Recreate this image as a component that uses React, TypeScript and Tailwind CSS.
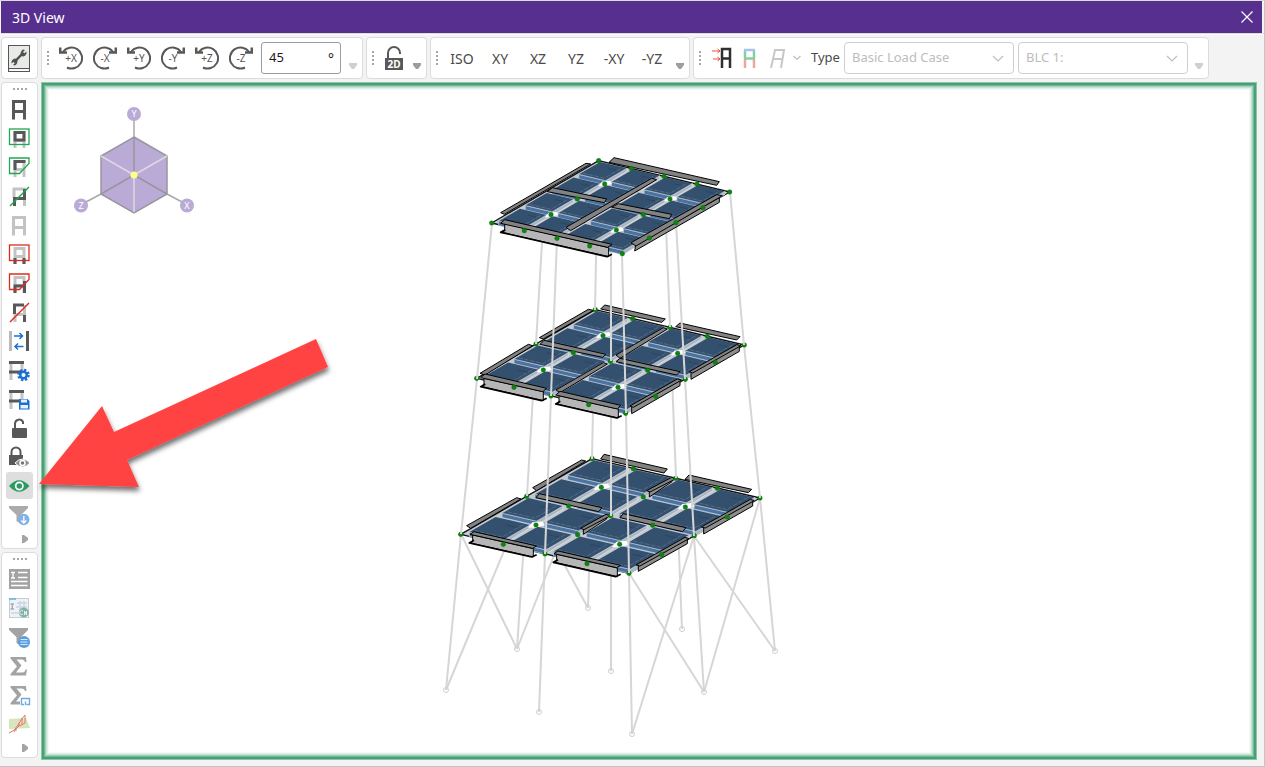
import { Fragment } from "react";
import type { ReactNode } from "react";

type Pt = [number, number];

type Deck = {
  x: number;
  y: number;
  left: Pt;
  back: Pt;
  right: Pt;
  front: Pt;
  nodes: Pt[];
  webs: string[];
  lightWebs: string[];
  flanges: string[];
};

// deck coordinates are in thirds of a pixel, relative to x / y
const topDeck: Deck = {
  x: 470,
  y: 145,
  left: [65, 234],
  back: [386, 47],
  right: [779, 141],
  front: [457, 326],
  nodes: [[65, 234], [386, 47], [779, 141], [457, 326], [484, 71], [582, 94], [681, 117], [404, 117], [243, 209], [600, 162], [439, 255], [163, 257], [261, 280], [359, 303], [538, 279], [618, 233], [699, 188], [322, 162], [520, 209]],
  lightWebs: ["104,236 416,308 416,335 96,262 104,258"],
  webs: ["497,300 748,158 748,172 494,318"],
  flanges: [
    "92,203 348,55 362,57 103,208",
    "432,38 748,110 740,121 417,52",
    "247,128 410,162 403,173 232,140",
    "445,176 605,208 598,221 425,187",
    "288,247 545,100 560,104 302,257",
    "104,224 426,298 413,307 92,235",
    "483,293 740,149 757,152 498,303",
  ],
};

const midDeck: Deck = {
  x: 460,
  y: 295,
  left: [50, 250],
  back: [406, 44],
  right: [853, 150],
  front: [497, 355],
  nodes: [[50, 250], [228, 147], [406, 44], [630, 97], [853, 150], [676, 253], [497, 355], [273, 303], [451, 199], [518, 71], [742, 124], [429, 122], [653, 175], [250, 225], [474, 277], [162, 277], [386, 329], [587, 304], [766, 202], [340, 173], [563, 226]],
  lightWebs: ["72,250 250,290 250,317 66,275 72,271", "297,302 475,342 475,369 291,327 297,323"],
  webs: ["515,335 660,256 660,272 515,356", "693,232 838,153 838,169 693,253"],
  flanges: [
    "238,128 385,43 400,46 250,132",
    "60,235 205,148 218,152 75,240",
    "434,30 616,72 605,82 422,42",
    "660,84 840,125 830,135 647,95",
    "468,180 610,98 622,102 480,190",
    "252,136 438,178 428,187 240,148",
    "480,190 660,230 650,240 468,200",
    "288,285 430,203 442,207 300,293",
    "75,237 260,280 248,290 62,248",
    "300,289 482,331 472,342 287,300",
    "510,333 652,252 665,255 520,337",
    "688,230 830,149 843,152 698,234",
  ],
};

const bottomDeck: Deck = {
  x: 440,
  y: 445,
  left: [62, 268],
  back: [456, 41],
  right: [960, 159],
  front: [567, 385],
  nodes: [[62, 268], [260, 154], [456, 41], [707, 100], [960, 159], [763, 272], [567, 385], [315, 327], [512, 212], [580, 71], [832, 130], [484, 127], [610, 156], [736, 186], [288, 240], [413, 269], [539, 298], [190, 298], [441, 356], [665, 329], [862, 216], [386, 183], [638, 241]],
  lightWebs: ["98,270 280,311 280,336 92,294 98,290", "350,328 532,369 532,395 344,352 350,348"],
  webs: ["595,361 742,281 742,296 595,379", "791,247 938,167 938,183 791,267", "430,250 500,212 500,222 430,268", "628,138 696,100 696,110 628,156"],
  flanges: [
    "278,128 425,45 437,48 290,137",
    "80,242 230,158 243,162 92,250",
    "492,28 682,72 672,84 482,42",
    "747,90 935,133 925,143 735,103",
    "620,137 695,97 708,101 630,141",
    "298,146 486,188 476,200 288,158",
    "550,206 738,248 728,260 540,218",
    "422,250 498,208 512,212 432,254",
    "102,260 290,303 278,310 90,268",
    "354,318 542,361 530,368 342,326",
    "588,360 735,277 747,281 600,363",
    "784,246 931,163 943,167 796,249",
  ],
};

// nine columns: left, left mid, back, back mid, right, right mid, front, front mid, centre
const top: Pt[] = [[492, 223], [545, 192], [598, 161], [664, 177], [730, 192], [676, 223], [622, 254], [557, 238], [611, 208]];
const mid: Pt[] = [[477, 379], [536, 344], [595, 310], [670, 327], [744, 345], [685, 379], [626, 413], [551, 396], [611, 361]];
const bottom: Pt[] = [[461, 534], [527, 496], [592, 459], [676, 478], [760, 498], [694, 536], [629, 573], [545, 554], [611, 516]];
const ground: Pt[] = [[446, 690], [517, 649], [588, 608], [682, 629], [775, 651], [704, 692], [632, 734], [539, 712], [611, 671]];

const braces: [Pt, Pt][] = [
  [bottom[0], ground[1]],
  [bottom[1], ground[0]],
  [bottom[2], ground[1]],
  [bottom[1], ground[2]],
  [bottom[6], ground[5]],
  [bottom[5], ground[6]],
  [bottom[5], ground[4]],
  [bottom[4], ground[5]],
];

function Members({ from, to }: { from: Pt[]; to: Pt[] }) {
  return (
    <g stroke="#d6d6d6" strokeWidth="2">
      {from.map((p, i) => (
        <line key={i} x1={p[0]} y1={p[1]} x2={to[i][0]} y2={to[i][1]} />
      ))}
    </g>
  );
}

function DeckDrawing({ deck }: { deck: Deck }) {
  const { left, back, right, front } = deck;
  const at = (u: number, v: number, drop = 0) => {
    const x = left[0] + ((back[0] - left[0]) * u) / 4 + ((front[0] - left[0]) * v) / 4;
    const y = left[1] + ((back[1] - left[1]) * u) / 4 + ((front[1] - left[1]) * v) / 4;
    return `${x.toFixed(1)},${(y + drop).toFixed(1)}`;
  };
  const cells: Pt[] = [];
  for (let u = 3; u >= 0; u--) for (let v = 0; v < 4; v++) cells.push([u, v]);

  return (
    <g transform={`translate(${deck.x} ${deck.y}) scale(0.33333)`} strokeLinejoin="round">
      <polygon points={[left, back, right, front].join(" ")} fill="#c4cad0" stroke="#111" strokeWidth="4" />
      {cells.map(([u, v]) => (
        <Fragment key={`${u}-${v}`}>
          <polygon
            points={[at(u + 0.16, v + 0.9), at(u + 0.96, v + 0.9), at(u + 0.96, v + 0.9, 9), at(u + 0.16, v + 0.9, 12)].join(" ")}
            fill="#aab6c1"
            stroke="#e6e9eb"
            strokeWidth="2"
          />
          <polygon
            points={[at(u + 0.16, v + 0.08), at(u + 0.16, v + 0.9), at(u + 0.16, v + 0.9, 13), at(u + 0.16, v + 0.08, 13)].join(" ")}
            fill="#4a73a2"
            stroke="#c3ced9"
            strokeWidth="2"
          />
          <polygon
            points={[at(u + 0.16, v + 0.08), at(u + 0.96, v + 0.08), at(u + 0.96, v + 0.9), at(u + 0.16, v + 0.9)].join(" ")}
            fill="#34506f"
          />
          <polyline
            points={[at(u + 0.16, v + 0.08), at(u + 0.16, v + 0.9), at(u + 0.96, v + 0.9)].join(" ")}
            fill="none"
            stroke="#c3ccd5"
            strokeWidth="2"
          />
          <polyline
            points={[at(u + 0.26, v + 0.12), at(u + 0.26, v + 0.78), at(u + 0.9, v + 0.78)].join(" ")}
            fill="none"
            stroke="#64788f"
            strokeWidth="2"
            strokeDasharray="14 4"
          />
          <polyline points={[at(u + 0.75, v + 0.5), at(u + 0.75, v + 0.75)].join(" ")} stroke="#2b4463" strokeWidth="3" />
        </Fragment>
      ))}
      {[1, 3].map((u) =>
        [1, 3].map((v) => (
          <polygon
            key={`${u}-${v}`}
            points={[at(u - 0.16, v - 0.06), at(u + 0.08, v - 0.14), at(u + 0.2, v), at(u + 0.08, v + 0.16), at(u - 0.1, v + 0.06)].join(" ")}
            fill="#fff"
          />
        )),
      )}
      <g stroke="#000" strokeWidth="3">
        {deck.webs.map((p) => (
          <polygon key={p} points={p} fill="#8d8d8d" />
        ))}
        {deck.lightWebs.map((p) => {
          const [cx, cy] = p.split(" ")[2].split(",").map(Number);
          const [dx, dy] = p.split(" ")[3].split(",").map(Number);
          return (
            <Fragment key={p}>
              <polygon points={p} fill="#b6b6b6" />
              <polyline points={`${dx + 10},${dy - 8} ${dx - 4},${dy} ${cx - 5},${cy} ${cx + 10},${cy - 7}`} fill="none" strokeWidth="5" />
            </Fragment>
          );
        })}
        {deck.flanges.map((p) => (
          <polygon key={p} points={p} fill="#828282" />
        ))}
      </g>
      {deck.nodes.map(([x, y]) => (
        <circle key={`${x}-${y}`} cx={x} cy={y} r="7" fill="#0a860a" stroke="#066006" strokeWidth="1" />
      ))}
    </g>
  );
}

function ViewCube() {
  return (
    <g fontFamily="'Noto Sans', sans-serif" fontSize="9" textAnchor="middle">
      <g stroke="#a8a8a8" strokeWidth="1.500">
        <line x1="134" y1="120" x2="134" y2="137" />
        <line x1="101" y1="194" x2="86" y2="202" />
        <line x1="167" y1="194" x2="182" y2="202" />
      </g>
      <polygon points="134,137 167,156 167,194 134,213 101,194 101,156" fill="#b9abd5" stroke="#99969f" strokeWidth="1.500" />
      <path d="M134 175V137M134 175L101 194M134 175L167 194" stroke="#99949f" strokeWidth="1.500" />
      <path d="M134 175V212M134 175L101 156M134 175L167 156" stroke="#dcd9e4" strokeWidth="1.500" />
      <circle cx="134" cy="175" r="3.500" fill="#ffff8c" />
      <circle cx="134" cy="114" r="7" fill="#b9abd5" />
      <circle cx="81" cy="205.500" r="7" fill="#b9abd5" />
      <circle cx="187" cy="205.500" r="7" fill="#b9abd5" />
      <g fill="#fff">
        <text x="134" y="117">Y</text>
        <text x="81" y="209">Z</text>
        <text x="187" y="209">X</text>
      </g>
    </g>
  );
}

function Scene() {
  return (
    <svg viewBox="41 82 1216 678" className="min-h-0 w-full flex-1 overflow-visible" role="img" aria-label="Model view">
      <defs>
        <filter id="arrowShadow" x="-10%" y="-10%" width="120%" height="130%">
          <feDropShadow dx="1" dy="4" stdDeviation="2.5" floodColor="#000" floodOpacity="0.55" />
        </filter>
      </defs>
      <ViewCube />
      <Members from={braces.map((b) => b[0])} to={braces.map((b) => b[1])} />
      <Members from={bottom} to={ground} />
      {ground.map(([x, y]) => (
        <circle key={`${x}-${y}`} cx={x} cy={y} r="2.500" fill="none" stroke="#cfcfcf" />
      ))}
      <DeckDrawing deck={bottomDeck} />
      <Members from={mid} to={bottom} />
      <DeckDrawing deck={midDeck} />
      <Members from={top} to={mid} />
      <DeckDrawing deck={topDeck} />
      <polygon points="39,484 102,406 114,432 316,339 328,367 127,460 139,487" fill="#ff4343" filter="url(#arrowShadow)" />
    </svg>
  );
}

const DARK = "#585858";
const LIGHT = "#c3c3c3";
const GREEN = "#1fa84f";
const RED = "#dd2c1e";
const BLUE = "#1b6fd0";

function Icon({ children }: { children: ReactNode }) {
  return (
    <svg viewBox="0 0 24 24" className="size-6" fill="none" aria-hidden="true">
      {children}
    </svg>
  );
}

const smallFrame = <path d="M8 22V6.500H17V22M8 14.500H17" stroke={LIGHT} strokeWidth="3" />;

const wideFrame = (
  <>
    <path d="M4 3V22M15 3V14" stroke={LIGHT} strokeWidth="3" />
    <path d="M2 4.500H17M2 14H14" stroke={DARK} strokeWidth="3" />
  </>
);

const modelTools: { label: string; icon: ReactNode; active?: boolean }[] = [
  { label: "Select all", icon: <path d="M6.500 22.500V4.500H17.500V22.500M6.500 14.500H17.500" stroke={DARK} strokeWidth="3" /> },
  {
    label: "Box select",
    icon: (
      <>
        {smallFrame}
        <rect x="8" y="6.500" width="9" height="7.500" stroke={DARK} strokeWidth="3" />
        <rect x="2.500" y="3" width="19.500" height="15.500" stroke={GREEN} strokeWidth="1.300" />
      </>
    ),
  },
  {
    label: "Polygon select",
    icon: (
      <>
        {smallFrame}
        <path d="M8 15V6.500H18.500" stroke={DARK} strokeWidth="3" />
        <path d="M2.500 3H22V8.500L12.500 18.500H2.500Z" stroke={GREEN} strokeWidth="1.300" />
      </>
    ),
  },
  {
    label: "Line select",
    icon: (
      <>
        <path d="M7 14V5H17.500V22" stroke={LIGHT} strokeWidth="3" />
        <path d="M7.500 22V14.500H17.500V5" stroke={DARK} strokeWidth="3" />
        <path d="M3 22L22 3" stroke={GREEN} strokeWidth="1.500" />
      </>
    ),
  },
  { label: "Unselect all", icon: <path d="M6.500 22.500V4.500H17.500V22.500M6.500 14.500H17.500" stroke={LIGHT} strokeWidth="3" /> },
  {
    label: "Box unselect",
    icon: (
      <>
        {smallFrame}
        <path d="M8 16V22M17 16V22" stroke={DARK} strokeWidth="3" />
        <rect x="2.500" y="3" width="19.500" height="15.500" stroke={RED} strokeWidth="1.300" />
      </>
    ),
  },
  {
    label: "Polygon unselect",
    icon: (
      <>
        {smallFrame}
        <path d="M8 22V15H17M17.500 10V22" stroke={DARK} strokeWidth="3" />
        <path d="M2.500 3H22V8.500L12.500 18.500H2.500Z" stroke={RED} strokeWidth="1.300" />
      </>
    ),
  },
  {
    label: "Line unselect",
    icon: (
      <>
        <path d="M8 22V14.500H17.500V5" stroke={LIGHT} strokeWidth="3" />
        <path d="M7.500 14V5H17M17.500 15V22" stroke={DARK} strokeWidth="3" />
        <path d="M3 22L22 3" stroke={RED} strokeWidth="1.500" />
      </>
    ),
  },
  {
    label: "Invert selection",
    icon: (
      <>
        <path d="M3.500 2V22" stroke="#b9b9b9" strokeWidth="3" />
        <path d="M20.500 2V22" stroke={DARK} strokeWidth="3" />
        <path d="M7 7H15.500M12.500 4L15.500 7L12.500 10M16.500 17.500H8M11 14.500L8 17.500L11 20.500" stroke={BLUE} strokeWidth="1.500" />
      </>
    ),
  },
  {
    label: "Selection settings",
    icon: (
      <>
        {wideFrame}
        <circle cx="16.500" cy="17" r="4.500" fill={BLUE} />
        <circle cx="16.500" cy="17" r="5" stroke={BLUE} strokeWidth="2.500" strokeDasharray="2.200 1.727" />
        <circle cx="16.500" cy="17" r="2" fill="#fff" />
      </>
    ),
  },
  {
    label: "Save selection",
    icon: (
      <>
        {wideFrame}
        <path d="M12 12H20.500L22.500 14V22.500H12Z" fill={BLUE} />
        <path d="M14 12.500H20V15.500H14ZM13.500 18H21V21.500H13.500Z" fill="#e6f1ff" />
      </>
    ),
  },
  {
    label: "Unlock unselected",
    icon: (
      <>
        <rect x="5" y="12" width="15" height="10" rx="1" fill={DARK} />
        <path d="M8 12V7.500A4.200 4.200 0 0 1 16 6V8" stroke={DARK} strokeWidth="2" />
      </>
    ),
  },
  {
    label: "Locked visibility",
    icon: (
      <>
        <rect x="2" y="10" width="14" height="10" fill={DARK} />
        <path d="M4.500 11V7A4.500 4.500 0 0 1 13.500 7V11" stroke={DARK} strokeWidth="2" />
        <path d="M8 18Q15.500 10 23 18Q15.500 26 8 18Z" fill="#8c8c8c" stroke="#fff" />
        <circle cx="15.500" cy="18" r="2.500" fill="#777" stroke="#fff" strokeWidth="1.500" />
      </>
    ),
  },
  {
    label: "Show unselected",
    active: true,
    icon: (
      <>
        <path d="M2 12Q12 0.500 22.500 12Q12 23.500 2 12Z" fill="#2c9a63" />
        <circle cx="12.300" cy="12" r="3.600" stroke="#fff" strokeWidth="1.700" />
      </>
    ),
  },
  {
    label: "Filter down",
    icon: (
      <>
        <path d="M2 3H21V5L14 12V21L9.500 18V12L2 5Z" fill="#ababab" />
        <circle cx="16.800" cy="16.500" r="5.700" fill="#7fb2e6" />
        <path d="M16.800 13V19.500M14.300 17.500L16.800 20L19.300 17.500" stroke="#fff" strokeWidth="1.300" />
      </>
    ),
  },
];

const resultTools: { label: string; icon: ReactNode }[] = [
  {
    label: "Member detail",
    icon: (
      <>
        <rect x="2" y="2" width="21" height="20" fill="#a3a3a3" />
        <path d="M4 5.500H8M6 5.500V11M4 11H8M11 5.500H20.500M11 10.500H20.500M4 14.500H20.500M4 18.500H20.500" stroke="#fff" strokeWidth="1.300" />
      </>
    ),
  },
  {
    label: "Design report",
    icon: (
      <>
        <rect x="2.500" y="2.500" width="19" height="19" fill="#eef2f6" stroke="#c5ccd3" />
        <path d="M2 3H9" stroke="#6ab0e0" strokeWidth="1.500" />
        <path d="M3.500 8H7M5.200 8V13M3.500 13H7" stroke="#8b929a" />
        <path d="M10 7H20M9 11H20M4 17H12M13 5V14M17 5V12" stroke="#ccd6df" strokeWidth="1.500" />
        <circle cx="16.800" cy="16.500" r="5" fill="#84b0aa" />
        <path d="M16 15A2 2 0 1 0 16 18M17.500 19V15L19.500 19V15" stroke="#eaf3f1" />
      </>
    ),
  },
  {
    label: "Filter results",
    icon: (
      <>
        <path d="M2 3H21V5L14 12V21L9.500 18V12L2 5Z" fill="#a3a3a3" />
        <circle cx="17" cy="17" r="6" fill="#5d9edf" />
        <path d="M13.500 14.500H20.500M13.500 17H20.500M13.500 19.500H20.500" stroke="#d6e8fa" strokeWidth="1.200" />
      </>
    ),
  },
  { label: "Sum results", icon: <path d="M3.500 3H19L19.500 8H18Q17.500 5.500 14.500 5.500H9.500L14.500 11.500L9 18.500H15.500Q18 18.500 18.500 15.500H20L19 21.500H3.500V20L10 12.500L3.500 4.500Z" fill="#a3a3a3" /> },
  {
    label: "Sum in view",
    icon: (
      <>
        <path d="M3.500 3H19L19.500 8H18Q17.500 5.500 14.500 5.500H9.500L14.500 11.500L9 18.500H13V21.500H3.500V20L10 12.500L3.500 4.500Z" fill="#a3a3a3" />
        <path d="M17 21.500H14.500V15.500H22.500V21.500H19.500M18.500 18.500V22" stroke="#6faae0" strokeWidth="1.400" />
      </>
    ),
  },
  {
    label: "Response curve",
    icon: (
      <>
        <path d="M2 7L19 6L23 16L2 17Z" fill="#cdeab5" />
        <path d="M5 9L17 8L20 14L4 14Z" fill="#e4dfc4" />
        <path d="M2 21Q8 19 11 13T18 3M18 3V11Q15 13 12 14Q8 17 7 20M15 6V12M12 11V14M9 16V19" stroke="#e3766c" />
      </>
    ),
  },
];

function Grip() {
  return (
    <span className="flex flex-col gap-[2px]" aria-hidden="true">
      {[0, 1, 2, 3].map((i) => (
        <span key={i} className="size-[2px] bg-[#a6a6a6]" />
      ))}
    </span>
  );
}

function Overflow({ dim, className = "" }: { dim?: boolean; className?: string }) {
  return (
    <button type="button" aria-label="Toolbar options" className={`mb-[9px] self-end ${className}`}>
      <svg viewBox="0 0 8 6" className="h-[6px] w-2" fill={dim ? "#cfcfd1" : "#9c9ca3"}>
        <path d="M0 0H8V2L5 6H3L0 2Z" />
      </svg>
    </button>
  );
}

function Rotate({ axis }: { axis: string }) {
  const back = axis[0] === "-";
  return (
    <button type="button" aria-label={`Rotate ${axis}`}>
      <svg viewBox="0 0 24 24" className="size-6" fill="none">
        <g transform={back ? "translate(24 0) scale(-1 1)" : undefined} stroke={DARK} strokeWidth="2">
          <path d="M4 6A10.500 10.500 0 1 1 8 21.500" />
          <path d="M1.200 1.500V6.500H8" strokeWidth="2.500" />
        </g>
        <text x="12" y="16" textAnchor="middle" fontSize="10" fontFamily="'Noto Sans', sans-serif" fill="#555">
          {axis}
        </text>
      </svg>
    </button>
  );
}

function ToolButton({ label, icon, active }: { label: string; icon: ReactNode; active?: boolean }) {
  return (
    <button
      type="button"
      aria-label={label}
      className={`my-px flex size-[27px] items-center justify-center rounded-[3px] pr-px ${active ? "bg-[#dedede]" : ""}`}
    >
      <Icon>{icon}</Icon>
    </button>
  );
}

function SidePanel({ children }: { children: ReactNode }) {
  return (
    <div className="flex flex-col items-center rounded-[4px] border border-[#dcdcdc] bg-white">
      <span className="mt-[5px] mb-1 flex gap-[2px]" aria-hidden="true">
        {[0, 1, 2, 3].map((i) => (
          <span key={i} className="size-[2px] bg-[#a6a6a6]" />
        ))}
      </span>
      {children}
      <button type="button" aria-label="More tools" className="mt-[6px] mb-[5px] ml-[11px]">
        <svg viewBox="0 0 6 8" className="h-2 w-[6px]" fill="#a3a3a8">
          <path d="M0 0H2L6 3V5L2 8H0Z" />
        </svg>
      </button>
    </div>
  );
}

function Dropdown({ label, value }: { label: string; value: string }) {
  return (
    <div className="relative h-8 w-[170px]">
      <select
        disabled
        aria-label={label}
        className="size-full appearance-none rounded-[4px] border border-[#cfcfcf] bg-white px-[7px] text-[13px] text-[#bdbdbd] opacity-100"
      >
        <option>{value}</option>
      </select>
      <svg viewBox="0 0 12 7" className="pointer-events-none absolute top-[13px] right-[10px] h-[7px] w-3" fill="none">
        <path d="M1 1L6 6L11 1" stroke="#bdbdbd" strokeWidth="1.200" />
      </svg>
    </div>
  );
}

const bar = "flex h-[42px] items-center rounded-[4px] border border-[#dcdcdc] bg-white";

export default function App() {
  return (
    <div className="flex h-screen min-h-[767px] flex-col border-t border-r border-b border-[#c4c4c4] border-t-[#dcdcdc] bg-[#f3f3f3] pl-px font-['Noto_Sans',sans-serif] text-[14px] text-[#4a4a4a]">
      <header className="mr-[2px] flex h-8 items-center justify-between bg-[#572f8f] pr-[9px] pl-[11px] text-white">
        <h1 className="text-[14px]">3D View</h1>
        <button type="button" aria-label="Close">
          <svg viewBox="0 0 12 12" className="size-3" fill="none">
            <path d="M0.500 0.500L11.500 11.500M11.500 0.500L0.500 11.500" stroke="#fff" strokeWidth="1.200" />
          </svg>
        </button>
      </header>
      <div className="h-[2px] border-t border-[#dcdcdc] bg-white" />

      <div className="mt-[2px] flex gap-[3px]">
        <div className={`${bar} w-[37px] justify-center pr-px`}>
          <button type="button" aria-label="Drawing tools">
            <svg viewBox="0 0 22 27" className="h-[27px] w-[22px]" fill="none">
              <rect x="0.500" y="0.500" width="21" height="26" fill="#e8eae8" stroke="#555" />
              <path d="M1 23.500H21" stroke="#555" />
              <path d="M2 24.500H21V26H2Z" fill="#fff" />
              <path d="M6 17.500L15.500 7.500" stroke="#4f4f4f" strokeWidth="2.500" />
              <path d="M15 4.500Q11.500 7 13 11L15.500 11.500Q19 10 18.500 6.500L16 8.500L14.500 7.500L17 5Z" fill="#4f4f4f" />
              <path d="M7 20.500Q10.500 18 9 14L6.500 13.500Q3 15 3.500 18.500L6 16.500L7.500 17.500L5 20Z" fill="#4f4f4f" />
            </svg>
          </button>
        </div>

        <div className={`${bar} px-[5px]`}>
          <Grip />
          <div className="ml-[10px] flex gap-[10px]">
            {["+X", "-X", "+Y", "-Y", "+Z", "-Z"].map((axis) => (
              <Rotate key={axis} axis={axis} />
            ))}
          </div>
          <label className="ml-2 flex h-8 w-20 items-center rounded-[3px] border border-[#9b9ba3] px-[7px] pr-[6px] text-[#1a1a1a]">
            <input type="text" defaultValue="45" aria-label="Rotation angle" className="w-full min-w-0 text-[13px] outline-none" />
            <span className="text-[14px]">°</span>
          </label>
          <Overflow dim className="ml-2" />
        </div>

        <div className={`${bar} px-[5px]`}>
          <Grip />
          <button type="button" aria-label="Lock to 2D" className="ml-[10px]">
            <svg viewBox="0 0 20 26" className="h-[26px] w-5" fill="none">
              <path d="M4 13V8A6 6 0 0 1 16 8V9" stroke={DARK} strokeWidth="2" />
              <rect x="1" y="13" width="18" height="12" fill={DARK} />
              <text x="10" y="23" textAnchor="middle" fontSize="10" fontWeight="700" fontFamily="'Noto Sans', sans-serif" fill="#fff">
                2D
              </text>
            </svg>
          </button>
          <Overflow className="ml-[9px]" />
        </div>

        <div className={`${bar} px-[5px]`}>
          <Grip />
          <div className="ml-[5px] flex">
            {["ISO", "XY", "XZ", "YZ", "-XY", "-YZ"].map((view) => (
              <button key={view} type="button" className="h-8 w-[38px] text-center">
                {view}
              </button>
            ))}
          </div>
          <Overflow className="ml-[5px]" />
        </div>

        <div className={`${bar} pr-[5px] pl-[5px]`}>
          <Grip />
          <div className="ml-2 flex items-center gap-1">
            <button type="button" aria-label="Show loads">
              <Icon>
                <path d="M13 22V3H21V22M13 12.500H21" stroke="#2f2f2f" strokeWidth="2.500" />
                <path d="M3 5H11M8.500 3L11 5L8.500 7M4 13H11M8.500 11L11 13L8.500 15" stroke="#e4533f" />
              </Icon>
            </button>
            <button type="button" aria-label="Show member colors">
              <Icon>
                <path d="M8 13V22M17 13V22" stroke="#efa79d" strokeWidth="2.500" />
                <path d="M8 4V12M17 4V12M7 12.500H18" stroke="#83cfa0" strokeWidth="2.500" />
                <path d="M7 4H18" stroke="#a6c3ea" strokeWidth="2.500" />
              </Icon>
            </button>
            <button type="button" aria-label="Show deflected shape">
              <Icon>
                <path d="M6 22L10 4H19L16 22M8 13H17" stroke="#c8c8c8" strokeWidth="2" />
              </Icon>
            </button>
          </div>
          <button type="button" aria-label="Deflection options" className="ml-1">
            <svg viewBox="0 0 8 6" className="h-[6px] w-2" fill="none">
              <path d="M0.500 1L4 4.500L7.500 1" stroke="#bdbdbd" strokeWidth="1.200" />
            </svg>
          </button>
          <span className="mr-[5px] ml-[10px] w-7 text-[13px]">Type</span>
          <div className="flex gap-1">
            <Dropdown label="Type" value="Basic Load Case" />
            <Dropdown label="Load case" value="BLC 1:" />
          </div>
          <Overflow dim className="ml-[7px]" />
        </div>
      </div>

      <div className="mt-[3px] mb-[6px] flex flex-1 gap-[3px] pr-[7px]">
        <div className="flex w-[37px] flex-col gap-[3px]">
          <SidePanel>
            {modelTools.map((tool) => (
              <ToolButton key={tool.label} {...tool} />
            ))}
          </SidePanel>
          <SidePanel>
            {resultTools.map((tool) => (
              <ToolButton key={tool.label} {...tool} />
            ))}
          </SidePanel>
        </div>
        <main className="flex min-w-0 flex-1 bg-white shadow-[inset_0_0_0_1px_#8cc4a8,inset_0_0_0_3px_#46a177,inset_0_0_0_4px_#74b898,inset_0_0_0_5px_#a0cfb8,inset_0_0_0_6px_#c5e2d4,inset_0_0_0_7px_#e0f0e8,inset_0_0_0_8px_#f3f9f6]">
          <Scene />
        </main>
      </div>
    </div>
  );
}
